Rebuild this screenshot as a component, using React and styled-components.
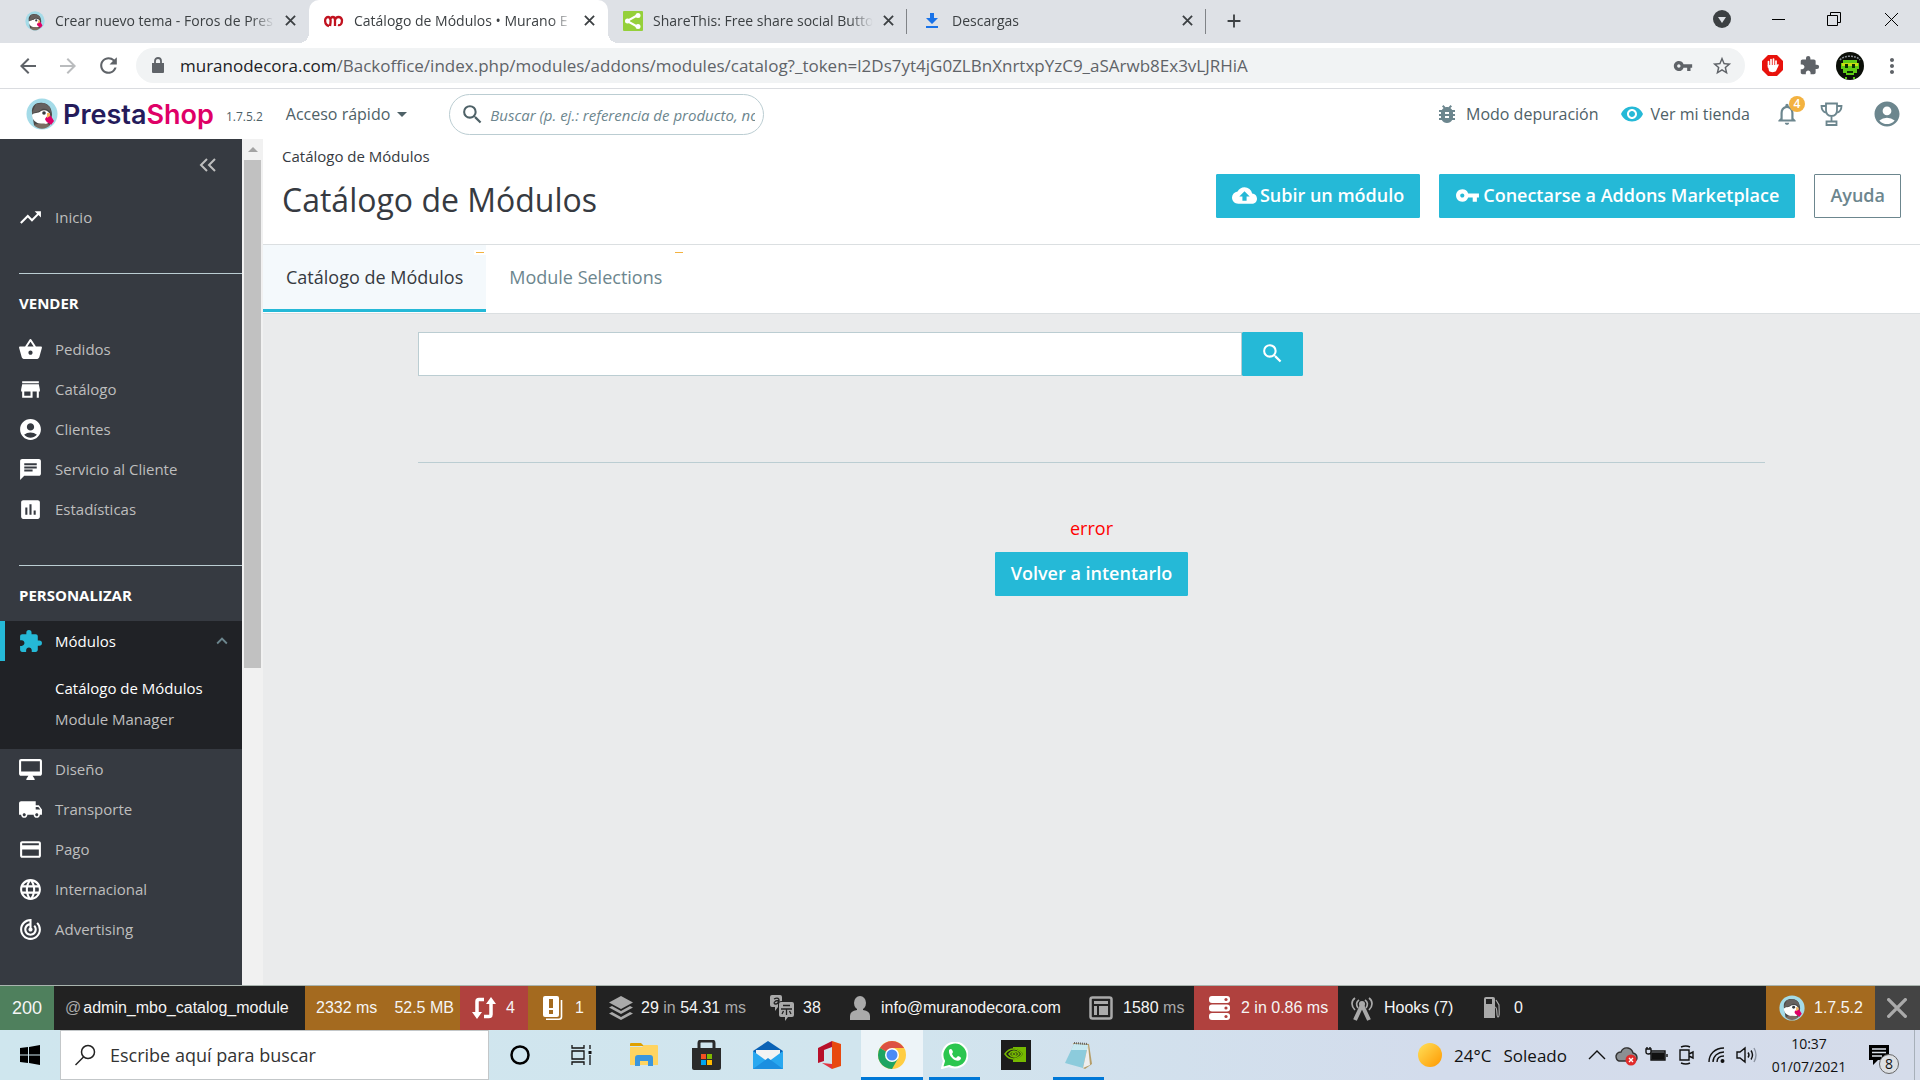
import React from "react";
import styled, { createGlobalStyle, css } from "styled-components";
import {
  MdTrendingUp, MdShoppingBasket, MdStore, MdAccountCircle, MdChat, MdAssessment, MdExtension,
  MdLocalShipping, MdCreditCard, MdLanguage, MdTrackChanges, MdSearch, MdVpnKey,
  MdCloudUpload, MdStarBorder, MdMoreVert, MdArrowBack, MdArrowForward, MdRefresh,
  MdKeyboardArrowUp, MdArrowDropDown, MdVisibility, MdBugReport, MdAdd, MdNotificationsNone,
} from "react-icons/md";

const cyan = "#25b9d7";
const ui = `"Open Sans", "Noto Sans", sans-serif`;
const arial = `"Liberation Sans", Arial, sans-serif`;

const Global = createGlobalStyle`
  * { box-sizing: border-box; }
  body { margin: 0; font-family: ${ui}; color: #363a41; background: #eaebec; }
  button, input { font-family: inherit; }
  a { color: inherit; text-decoration: none; }
  svg { display: block; flex: none; }
`;

const Screen = styled.div`
  min-height: 100vh;
  display: flex;
  flex-direction: column;
`;

const IconButton = styled.button`
  display: flex;
  align-items: center;
  justify-content: center;
  flex: none;
  width: ${(p) => p.$w || 24}px;
  height: ${(p) => p.$h || 24}px;
  padding: 0;
  border: 0;
  background: none;
  color: ${(p) => p.$color || "#3c4043"};
`;

/* ---------- browser window ---------- */

const TabStrip = styled.div`
  display: flex;
  height: 43px;
  background: #dee1e6;
  padding-left: 10px;
`;

const BrowserTab = styled.div`
  position: relative;
  display: flex;
  align-items: center;
  width: 299px;
  padding: 0 10px 2px 15px;
  gap: 10px;
  font-size: 14px;
  color: #3c4043;
  background: ${(p) => (p.$active ? "#fff" : "transparent")};
  border-radius: 10px 10px 0 0;
  ${(p) => p.$active && css`
    &::before, &::after {
      content: "";
      position: absolute;
      bottom: 0;
      width: 10px;
      height: 10px;
    }
    &::before { left: -10px; background: radial-gradient(circle at 0 0, transparent 10px, #fff 10px); }
    &::after { right: -10px; background: radial-gradient(circle at 100% 0, transparent 10px, #fff 10px); }
  `}
  ${(p) => p.$divider && css`
    &::after {
      content: "";
      position: absolute;
      right: 0;
      top: 9px;
      width: 1px;
      height: 25px;
      background: #808387;
    }
  `}
`;

const TabTitle = styled.span`
  flex: 1;
  min-width: 0;
  margin-right: -6px;
  white-space: nowrap;
  mask-image: linear-gradient(to right, #000 calc(100% - 26px), transparent calc(100% - 2px));
`;

const WindowControls = styled.div`
  display: flex;
  align-items: center;
  margin-left: auto;
  height: 38px;
`;

const AddressRow = styled.div`
  display: flex;
  align-items: center;
  height: 46px;
  padding: 0 16px;
  background: #fff;
  border-bottom: 1px solid #dadce0;
  color: #5f6368;
`;

const NavButtons = styled.div`
  display: flex;
  gap: 16px;
  margin-right: 16px;
`;

const Omnibox = styled.div`
  display: flex;
  flex: 1;
  align-items: center;
  height: 35px;
  padding: 0 12px 0 14px;
  border-radius: 18px;
  background: #f1f3f4;
  font-size: 17px;
  gap: 14px;
`;

const Url = styled.span`
  flex: 1;
  white-space: nowrap;
  b { font-weight: 400; color: #202124; }
`;

const OmniboxTools = styled.div`
  display: flex;
  align-items: center;
  gap: 18px;
`;

const Extensions = styled.div`
  display: flex;
  align-items: center;
  gap: 16px;
  margin-left: 17px;
`;

/* ---------- shop header ---------- */

const ShopHeader = styled.header`
  display: flex;
  align-items: center;
  height: 50px;
  padding: 0 18px 0 26px;
  background: #fff;
  color: #4e6167;
  font-size: 16px;
`;

const Brand = styled.a`
  display: flex;
  align-items: center;
  gap: 5px;
  font-family: Inter, "Open Sans", sans-serif;
  font-size: 27px;
  font-weight: 600;
  color: #251b5b;
  em { font-style: normal; color: #df0067; }
`;

const Version = styled.span`
  font-size: 12px;
  margin: 4px 23px 0 12px;
`;

const QuickAccess = styled.button`
  display: flex;
  align-items: center;
  padding: 0;
  border: 0;
  background: none;
  color: inherit;
  font-size: 16px;
`;

const HeaderSearch = styled.label`
  display: flex;
  align-items: center;
  gap: 5px;
  width: 315px;
  height: 41px;
  margin: 1px 0 0 35px;
  padding: 0 8px 0 10px;
  border: 1px solid #bbcdd2;
  border-radius: 21px;
  input {
    flex: 1;
    min-width: 0;
    padding: 0;
    border: 0;
    outline: 0;
    background: none;
    font-size: 15px;
    font-style: italic;
  }
  input::placeholder { color: #6c868e; }
`;

const HeaderActions = styled.nav`
  display: flex;
  align-items: center;
  margin-left: auto;
`;

const HeaderLink = styled.a`
  display: flex;
  align-items: center;
  gap: 7px;
  margin-right: 21px;
`;

const Bell = styled.div`
  position: relative;
  margin: 0 20px 0 3px;
  color: #6c868e;
`;

const TrophySlot = styled.div`
  margin-right: 29px;
`;

const Badge = styled.span`
  position: absolute;
  top: -5px;
  right: -5px;
  width: 16px;
  height: 16px;
  border-radius: 50%;
  background: #f3b240;
  color: #fff;
  font-size: 12px;
  font-weight: 600;
  line-height: 16px;
  text-align: center;
`;

/* ---------- sidebar ---------- */

const Body = styled.div`
  display: flex;
  flex: 1;
`;

const Sidebar = styled.aside`
  width: 242px;
  padding-bottom: 36px;
  background: #363a41;
  color: #bebebe;
  font-size: 15px;
`;

const CollapseRow = styled.div`
  display: flex;
  justify-content: flex-end;
  height: 58px;
  padding: 14px 22px 0 0;
`;

const MenuGroup = styled.ul`
  list-style: none;
  margin: 0;
  padding: 0;
`;

const MenuLink = styled.a`
  display: flex;
  align-items: center;
  gap: 12px;
  height: 40px;
  padding: 0 9px 0 ${(p) => (p.$active ? 13 : 18)}px;
  border-left: ${(p) => (p.$active ? 5 : 0)}px solid ${cyan};
  color: ${(p) => (p.$active ? "#fff" : "inherit")};
  svg:first-child { color: ${(p) => (p.$active ? cyan : "#fff")}; }
  svg:last-child:not(:first-child) { margin-left: auto; color: #6c868e; }
`;

const MenuTitle = styled.h2`
  margin: 36px 0 0 19px;
  padding: 18px 0 14px;
  border-top: 1px solid #bbcdd2;
  color: #fff;
  font-size: 15px;
  line-height: 23px;
  font-weight: 700;
`;

const ActiveBlock = styled.li`
  background: #202226;
`;

const SubMenu = styled.ul`
  list-style: none;
  margin: 0;
  padding: 12px 0 14px 55px;
  li { line-height: 31px; }
`;

const SubLink = styled.a`
  color: ${(p) => (p.$active ? "#fff" : "#bebebe")};
`;

const ScrollTrack = styled.div`
  width: 21px;
  padding: 0 2px;
  background: #f1f1f1;
`;

const ScrollArrow = styled.div`
  display: flex;
  align-items: center;
  justify-content: center;
  height: 21px;
`;

const ScrollThumb = styled.div`
  height: 60%;
  background: #c1c1c1;
`;

/* ---------- main page ---------- */

const Main = styled.main`
  flex: 1;
  min-width: 0;
`;

const PageHead = styled.div`
  display: flex;
  justify-content: space-between;
  height: 106px;
  padding: 6px 19px 0;
  background: #fff;
  border-bottom: 1px solid #dbdfe1;
`;

const Crumb = styled.div`
  font-size: 15px;
  line-height: 22px;
`;

const Title = styled.h1`
  margin: 8px 0 0;
  font-size: 32px;
  line-height: 50px;
  font-weight: 400;
`;

const Actions = styled.div`
  display: flex;
  align-items: flex-start;
  gap: 19px;
  padding-top: 29px;
`;

const Button = styled.button`
  display: flex;
  align-items: center;
  justify-content: center;
  gap: 3px;
  height: 44px;
  padding: 0 15px 2px;
  border: 1px solid ${(p) => (p.$outline ? "#6c868e" : cyan)};
  border-radius: 1px;
  background: ${(p) => (p.$outline ? "#fff" : cyan)};
  color: ${(p) => (p.$outline ? "#6c868e" : "#fff")};
  font-size: 18px;
  font-weight: 600;
  white-space: nowrap;
`;

const PageTabs = styled.nav`
  display: flex;
  height: 69px;
  background: #fff;
  border-bottom: 1px solid #dbdfe1;
`;

const PageTab = styled.a`
  position: relative;
  display: flex;
  align-items: center;
  height: 67px;
  padding: 0 23px;
  font-size: 18px;
  color: ${(p) => (p.$active ? "#363a41" : "#6c868e")};
  background: ${(p) => (p.$active ? "#f4f9fc" : "none")};
  border-bottom: 3px solid ${(p) => (p.$active ? cyan : "transparent")};
  &::after {
    content: "";
    position: absolute;
    top: 5px;
    right: 0;
    width: 8px;
    height: 1px;
    border: 2px solid #fff;
    background: #f3b240;
  }
`;

const Content = styled.section`
  padding: 18px 155px 0;
`;

const SearchForm = styled.form`
  display: flex;
  max-width: 885px;
  padding-bottom: 86px;
  input {
    flex: 1;
    min-width: 0;
    height: 44px;
    padding: 0 12px;
    border: 1px solid #bbcdd2;
    outline: 0;
    font-size: 16px;
  }
  button { width: 61px; }
`;

const Retry = styled.div`
  display: flex;
  flex-direction: column;
  align-items: center;
  padding-top: 53px;
  border-top: 1px solid #bbcdd2;
  color: #ff0000;
  font-size: 18px;
  line-height: 24px;
  gap: 12px;
`;

/* ---------- debug bar ---------- */

const DebugBar = styled.div`
  display: flex;
  height: 45px;
  border-top: 1px solid #a9b4ae;
  background: #222;
  color: #f5f5f5;
  font-family: ${arial};
  font-size: 16px;
`;

const Block = styled.div`
  display: flex;
  align-items: center;
  flex: none;
  gap: ${(p) => p.$gap || 10}px;
  width: ${(p) => p.$w}px;
  padding-left: ${(p) => p.$pad || 12}px;
  background: ${(p) => p.$bg || "transparent"};
  margin-left: ${(p) => (p.$end ? "auto" : 0)};
  white-space: nowrap;
  small { font-size: 16px; color: #aaa; }
  strong { font-size: 18px; font-weight: 400; }
`;

/* ---------- taskbar ---------- */

const Taskbar = styled.footer`
  display: flex;
  align-items: center;
  height: 50px;
  background: linear-gradient(90deg, #cfe6ee 0%, #d1e5ee 45%, #d3dcec 75%, #d5dcea 100%);
  color: #111;
`;

const TaskSearch = styled.label`
  display: flex;
  align-items: center;
  width: 429px;
  height: 50px;
  padding: 0 13px;
  gap: 14px;
  border: 1px solid #c3c7c9;
  background: #fff;
  input {
    flex: 1;
    padding: 0;
    border: 0;
    outline: 0;
    font-size: 18px;
  }
  input::placeholder { color: #333; }
`;

const TaskApp = styled.button`
  display: flex;
  align-items: center;
  justify-content: center;
  width: 62px;
  height: 50px;
  padding: 0;
  border: 0;
  background: ${(p) => (p.$active ? "#edf4f8" : "none")};
  ${(p) => p.$open && css`
    background-image: linear-gradient(#0078d7, #0078d7);
    background-size: ${p.$active ? "100%" : "51px"} 3px;
    background-position: bottom center;
    background-repeat: no-repeat;
  `}
`;

const Tray = styled.div`
  display: flex;
  align-items: center;
  height: 50px;
  margin-left: auto;
  padding-right: 5px;
  font-size: 17px;
`;

const Weather = styled.div`
  display: flex;
  align-items: center;
  margin-right: 18px;
  gap: 12px;
`;

const TrayIcons = styled.div`
  display: flex;
  align-items: center;
  gap: 6px;
`;

const Clock = styled.div`
  width: 100px;
  font-size: 14px;
  line-height: 23px;
  text-align: center;
`;

const Notice = styled.div`
  position: relative;
  width: 56px;
  height: 50px;
  padding: 15px 0 0 10px;
  border-right: 1px solid #a7b0b9;
  span {
    position: absolute;
    left: 20px;
    top: 24px;
    width: 20px;
    height: 20px;
    border: 1px solid #666;
    border-radius: 50%;
    background: #dcdfe3;
    font-size: 14px;
    line-height: 18px;
    text-align: center;
  }
`;

/* ---------- drawings ---------- */

const Cross = ({ s = 11, w = 2, color = "#3c4043" }) => (
  <svg width={s} height={s} viewBox="0 0 12 12" fill="none" stroke={color} strokeWidth={w}><path d="m1 1 10 10M11 1 1 11" strokeLinecap={s > 12 ? "round" : "butt"} /></svg>
);

const Lock = () => (
  <svg width="16" height="17" viewBox="0 0 16 17"><path d="M2 6h12v9q0 1-1 1H3q-1 0-1-1Z" fill="#5f6368" /><path d="M5 7V4c0-4 6-4 6 0v3" fill="none" stroke="#5f6368" strokeWidth="1.800" /></svg>
);

const Desktop = ({ size }) => (
  <svg width={size} height={size} viewBox="0 0 24 24" fill="currentColor">
    <path d="M21 2H3c-1.100 0-2 .9-2 2v12c0 1.100.9 2 2 2h7l-2 3v1h8v-1l-2-3h7c1.100 0 2-.9 2-2V4c0-1.100-.9-2-2-2zm0 12H3V4h18v10z" />
  </svg>
);

const Puffin = ({ s = 20 }) => (
  <svg width={s} height={s} viewBox="0 0 32 32">
    <circle cx="16" cy="16" r="15.500" fill="#a4dbe8" />
    <path d="M6 15C5 7 11 4 17 5c7 1 9 7 9 12l-2 10c-5 3-12 3-16 0Z" fill="#4b4948" />
    <path d="M6 17c2-3 6-1 9-4 4-2 8 0 9 4l1 5c-2 4-6 5-10 4-5-1-9-4-9-9Z" fill="#fff" />
    <path d="M6 15c4-1 7-1 10-4 4-1 7 1 9 4l-1-6-6-4-8 1Z" fill="#66615f" />
    <circle cx="18" cy="15" r="1.800" fill="#363a41" />
    <path d="M19 21c2-3 4-5 6-3l3 5-3 4c-1-2-5-2-6-6Z" fill="#df0067" />
    <path d="M21 15h3v3l-3 2Z" fill="#f4b35e" />
    <path d="M8 27c5-2 11-2 16 0-4 5-12 5-16 0Z" fill="#7b6d62" />
  </svg>
);

const MuranoMark = () => (
  <svg width="20" height="20" viewBox="0 0 20 20" fill="none" stroke="#c1121f" strokeWidth="2.300">
    <path d="M5 15C0 14 0 6 4 6c3 0 3 4 2 9M6 9c1-4 5-4 5 0v6M11 9c1-4 6-4 7 0 0 3-1 6-4 5" />
  </svg>
);

const ShareMark = () => (
  <svg width="20" height="20" viewBox="0 0 20 20">
    <rect width="20" height="20" rx="1" fill="#95d03a" />
    <path d="M15 4 4 10l11 6" fill="none" stroke="#fff" strokeWidth="2" />
    <g fill="#fff"><circle cx="15" cy="4.500" r="2.500" /><circle cx="4.500" cy="10" r="2.500" /><circle cx="15" cy="15.500" r="2.500" /></g>
  </svg>
);

const DownloadMark = () => (
  <svg width="20" height="16" viewBox="-3 0 20 16" fill="#1a73e8">
    <path d="M5 0h4v5h4l-6 6-6-6h4ZM1 13h12v2H1Z" />
  </svg>
);

const BlockMark = () => (
  <svg width="21" height="21" viewBox="0 0 21 21">
    <path d="M6 0h9l6 6v9l-6 6H6l-6-6V6Z" fill="#e8120c" />
    <path d="M6.500 12V6.500M9 11V4.500M11.500 11V4M14 12V6" stroke="#fff" strokeWidth="1.700" strokeLinecap="round" />
    <path d="M5.700 10h9.200l1-1c1 0 1 1 .500 2L14 16c-1 1.500-6 1.500-7 0Z" fill="#fff" />
  </svg>
);

const Avatar = () => (
  <svg width="28" height="28" viewBox="0 0 28 28">
    <circle cx="14" cy="14" r="14" fill="#0b0f08" />
    <path d="M4 8C7 3 21 3 24 8" fill="none" stroke="#8a9097" strokeWidth="1.500" strokeDasharray="2 1" />
    <path d="M7 8h14v3h2v6h-2v4h-3v2h-8v-2H7v-4H5v-6h2Z" fill="#5ecb14" />
    <path d="M6 11h16v3H6Z" fill="#c9dd12" />
    <path d="M9 12h3v4H9Zm7 0h3v4h-3ZM11 19h6v2h-6Z" fill="#0b2a05" />
    <path d="M9 25h2v2H9Zm8 0h2v2h-2Z" fill="#5ecb14" />
  </svg>
);

const Trophy = () => (
  <svg width="23" height="24" viewBox="0 0 23 24" fill="none" stroke="#6c868e" strokeWidth="1.800">
    <path d="M6 1.500h11V8c0 4-2.500 6-5.500 6S6 12 6 8ZM6 4H1.500c0 4 2 6 5 7M17 4h4.500c0 4-2 6-5 7M11.500 14v5M6.500 19.500h10v3.500h-10Z" />
  </svg>
);

const DoubleChevron = () => (
  <svg width="20" height="24" viewBox="0 0 20 24" fill="none" stroke="#bebebe" strokeWidth="2">
    <path d="m9 6-6 6 6 6M17 6l-6 6 6 6" />
  </svg>
);

const Restart = () => (
  <svg width="24" height="24" viewBox="0 0 24 24" fill="none" stroke="#fff" strokeWidth="3.500">
    <path d="M12 3.500H7q-2 0-2 2V17M12 20.500h5q2 0 2-2V7" /><path d="m0 16 5 7 5-7ZM14 8l5-7 5 7Z" fill="#fff" stroke="none" />
  </svg>
);

const LogBook = () => (
  <svg width="20" height="24" viewBox="0 0 20 24">
    <rect x="0" y="0" width="16" height="21" rx="2" fill="#fff" />
    <path d="M3 23.200h13q2.500 0 2.500-2.500V4" fill="none" stroke="#fff" strokeWidth="1.600" />
    <path d="M6 3h4v9H6Zm0 11h4v4H6Z" fill="#a46a1f" />
  </svg>
);

const Layers = () => (
  <svg width="24" height="24" viewBox="0 0 24 24" fill="#aaa">
    <path d="m12 0 12 6.500L12 13 0 6.500ZM3 10l9 5 9-5 3 1.500L12 18 0 11.500ZM3 16l9 5 9-5 3 1.500L12 24 0 17.500Z" />
  </svg>
);

const Translate = () => (
  <svg width="24" height="27" viewBox="0 0 24 27">
    <path d="M2 0h8q2 0 2 2v4q-4 0-4 4v2l-3 4v-4H2q-2 0-2-2V2q0-2 2-2Z" fill="#aaa" />
    <path d="M4 4c4-2 5 0 5 1v4M8.500 5.500C4 5.500 3 9 5.500 9 7 9 8.500 8 8.500 6" fill="none" stroke="#222" strokeWidth="1.300" />
    <path d="M11 7h11q2 0 2 2v11q0 2-2 2h-4l-3 4v-4h-4q-2 0-2-2V9q0-2 2-2Z" fill="#aaa" />
    <path d="M13 10.500h7M11 14h11M16.500 14V20M13.500 16 12 19M19.500 16 21 19" stroke="#222" strokeWidth="1.300" />
  </svg>
);

const Person = () => (
  <svg width="20" height="24" viewBox="0 0 20 24" fill="#aaa">
    <ellipse cx="10" cy="7" rx="6" ry="7" /><path d="M7 11h6v3q7 1 7 6v4H0v-4q0-5 7-6Z" />
  </svg>
);

const Template = () => (
  <svg width="24" height="24" viewBox="0 0 24 24">
    <rect x="1.500" y="1.500" width="21" height="21" rx="2" fill="none" stroke="#aaa" strokeWidth="2.500" />
    <path d="M5 5h14v3H5ZM5 10h3v9H5ZM10 10h9v9h-9Z" fill="#aaa" />
  </svg>
);

const Database = () => (
  <svg width="22" height="24" viewBox="0 0 22 24">
    <g fill="#fff"><rect width="21" height="7" rx="3" /><rect y="8.500" width="21" height="7" rx="3" /><rect y="17" width="21" height="7" rx="3" /></g>
    <g fill="#b0413e"><circle cx="17" cy="3.500" r="1.600" /><circle cx="17" cy="12" r="1.600" /><circle cx="17" cy="20.500" r="1.600" /></g>
  </svg>
);

const Antenna = () => (
  <svg width="22" height="25" viewBox="0 0 22 25" fill="none" stroke="#aaa" strokeWidth="1.700">
    <path d="M4 14C0 10 0 5 4 2M18 14c4-4 4-9 0-12M7 12c-2-3-2-6 1-8M15 12c2-3 2-6-1-8" />
    <circle cx="11" cy="8" r="3" fill="#aaa" stroke="none" />
    <path d="m11 9-7 15M11 9l7 15" strokeWidth="4" />
  </svg>
);

const Pump = () => (
  <svg width="16" height="23" viewBox="0 0 16 23">
    <path d="M0 2q0-2 2-2h7q2 0 2 2v19H0Z" fill="#aaa" /><path d="M2 2h6v5H2Z" fill="#222" />
    <path d="M11 10c3 0 1 10 3 10s1-7 1-12l-3-5" fill="none" stroke="#aaa" strokeWidth="1.200" />
  </svg>
);

const WindowsMark = () => (
  <svg width="20" height="20" viewBox="0 0 20 20"><path d="M0 3l8-1v7.500H0ZM9 2l11-2v9.500H9ZM0 10.500h8V18l-8-1ZM9 10.500h11V20L9 18Z" /></svg>
);

const Magnifier = () => (
  <svg width="22" height="22" viewBox="0 0 22 22" fill="none" stroke="#222" strokeWidth="1.500"><circle cx="14" cy="8" r="6.500" /><path d="m9.500 13-8 8" /></svg>
);

const apps = [
  ["Cortana", <svg width="20" height="20"><circle cx="10" cy="10" r="8.500" fill="none" stroke="#000" strokeWidth="2.500" /></svg>],
  ["Vista de tareas", <svg width="22" height="20" viewBox="0 0 22 20" fill="none" stroke="#111" strokeWidth="1.300"><path d="M1 0v3h12V0M1 20v-3h12v3M1 6h12v8H1ZM19 0v4M19 10v10" /><path d="M17.500 6h3v3h-3Z" fill="#111" stroke="none" /></svg>],
  ["Explorador", <svg width="28" height="24" viewBox="0 0 28 24"><path d="M0 1q0-1 1-1h10l3 3H0Z" fill="#dfa000" /><path d="M0 4h12l2-2h13q1 0 1 1v19H0Z" fill="#ffd460" /><path d="M5 23V15q0-3 3-3h12q3 0 3 3v8h-5v-5h-8v5Z" fill="#3b96dd" /></svg>],
  ["Store", <svg width="29" height="30" viewBox="0 0 29 30"><path d="M7 9V3q0-2 2-2h11q2 0 2 2v6" fill="none" stroke="#2b2b2b" strokeWidth="3" /><path d="M0 8h29v20q0 2-2 2H2q-2 0-2-2Z" fill="#2b2b2b" /><path d="M9 14h5v5H9Z" fill="#f25022" /><path d="M15 14h5v5h-5Z" fill="#7fba00" /><path d="M9 20h5v5H9Z" fill="#00a4ef" /><path d="M15 20h5v5h-5Z" fill="#ffb900" /></svg>],
  ["Correo", <svg width="30" height="28" viewBox="0 0 30 28"><path d="m0 10 15-10 15 10v4H0Z" fill="#0a62b5" /><path d="M3 9h24v12H3Z" fill="#f3f3f3" /><path d="M0 10l15 11L30 10v18H0Z" fill="#29a8f0" /><path d="m0 28 15-11 15 11Z" fill="#1c8fe0" /></svg>],
  ["Office", <svg width="24" height="28" viewBox="0 0 24 28"><path d="M0 7 14 0v6L6 9v11l-6 2Z" fill="#b8102a" /><path d="m14 0 9 3v22l-9 3V0Z" fill="#e8490f" /><path d="m4 22 10 1v5Z" fill="#e3323f" /></svg>],
  ["Chrome", <svg width="28" height="28" viewBox="0 0 28 28"><circle cx="14" cy="14" r="14" fill="#ffcd42" /><path d="M14 14 1.900 7A14 14 0 0 1 26.100 7H14Z" fill="#dd5144" /><path d="M1.900 7A14 14 0 0 0 14 28l6-10.500L14 14Z" fill="#1da462" /><circle cx="14" cy="14" r="7" fill="#fff" /><circle cx="14" cy="14" r="5.500" fill="#4c8bf5" /></svg>, true, true],
  ["WhatsApp", <svg width="27" height="27" viewBox="0 0 27 27"><path d="m1 26 2-7A12.500 12.500 0 1 1 8 24Z" fill="#2cc64f" stroke="#fff" strokeWidth="2" /><path d="M8 8c2-2 3-1 4 2l-1 2q1 3 4 4l2-2c3 1 4 2 2 4-3 3-12-3-11-10Z" fill="#fff" /></svg>, true],
  ["NVIDIA", <svg width="30" height="30" viewBox="0 0 30 30"><path d="M0 0h30v30H0Z" fill="#1c1c1c" /><path d="M12 7h13v15H12Z" fill="#76b900" /><path d="M4 14c5-7 13-7 18 0-4 6-13 8-18 0Z" fill="#1c1c1c" /><path d="M4 14c5-7 13-6 17 0-4 6-12 7-17 0ZM8 14c3-4 7-4 10 0-3 4-7 4-10 0Zm3 0q2-3 4 0-2 3-4 0Z" fill="none" stroke="#76b900" strokeWidth="1.500" /></svg>],
  ["Bloc de notas", <svg width="28" height="27" viewBox="0 0 28 27"><path d="m9 1 16 1 3 20-7 5-2-1Z" fill="#b59d68" /><path d="m10 2 14 1-5 23L1 21Z" fill="#8ccbdc" /><path d="m10 2 14 1-1 5L7 8Z" fill="#c7e9f1" /><path d="m24 3 2 20-7 3Z" fill="#eee" /><path d="m10 1 14 1" stroke="#666" strokeWidth="2" strokeDasharray="1 1" /></svg>, true],
];

const Glyph = ({ children }) => (
  <svg width="24" height="24" viewBox="0 0 24 24" fill="none" stroke="#111" strokeWidth="1.400">{children}</svg>
);

const MenuItems = ({ items }) => items.map(([label, Icon]) => (
  <li key={label}><MenuLink href="#"><Icon size={25} />{label}</MenuLink></li>
));

const CloseTab = () => (
  <IconButton $w={18} aria-label="Cerrar pestaña"><Cross /></IconButton>
);

export default function App() {
  return (
    <Screen>
      <Global />
      <TabStrip>
        <BrowserTab><Puffin /><TabTitle>Crear nuevo tema - Foros de Pres</TabTitle><CloseTab /></BrowserTab>
        <BrowserTab $active><MuranoMark /><TabTitle>Catálogo de Módulos • Murano E</TabTitle><CloseTab /></BrowserTab>
        <BrowserTab $divider><ShareMark /><TabTitle>ShareThis: Free share social Butto</TabTitle><CloseTab /></BrowserTab>
        <BrowserTab $divider><DownloadMark /><TabTitle>Descargas</TabTitle><CloseTab /></BrowserTab>
        <IconButton $w={56} $h={42} aria-label="Nueva pestaña"><MdAdd size={22} /></IconButton>
        <WindowControls>
          <IconButton $w={56} $h={43} aria-label="Buscar pestañas"><svg width="18" height="18"><circle cx="9" cy="9" r="9" fill="#3c4043" /><path d="M5 7h8l-4 6Z" fill="#dee1e6" /></svg></IconButton>
          <IconButton $w={56} aria-label="Minimizar"><svg width="13" height="13" stroke="#000"><path d="M0 6.500h13" /></svg></IconButton>
          <IconButton $w={56} aria-label="Restaurar"><svg width="14" height="14" fill="none" stroke="#000"><path d="M.500 3.500h10v10H.500ZM3.500 3V.500h10v10H11" /></svg></IconButton>
          <IconButton $w={58} aria-label="Cerrar"><svg width="13" height="13" stroke="#000"><path d="m0 0 13 13M13 0 0 13" /></svg></IconButton>
        </WindowControls>
      </TabStrip>
      <AddressRow>
        <NavButtons>
          <IconButton aria-label="Atrás" $color="#5f6368"><MdArrowBack size={24} /></IconButton>
          <IconButton aria-label="Adelante" $color="#babcbe"><MdArrowForward size={24} /></IconButton>
          <IconButton aria-label="Recargar" $color="#5f6368"><MdRefresh size={25} /></IconButton>
        </NavButtons>
        <Omnibox>
          <Lock />
          <Url><b>muranodecora.com</b>/Backoffice/index.php/modules/addons/modules/catalog?_token=l2Ds7yt4jG0ZLBnXnrtxpYzC9_aSArwb8Ex3vLJRHiA</Url>
          <OmniboxTools>
            <MdVpnKey size={20} />
            <MdStarBorder size={22} />
          </OmniboxTools>
        </Omnibox>
        <Extensions>
          <BlockMark />
          <MdExtension size={21} />
          <Avatar />
          <MdMoreVert size={24} />
        </Extensions>
      </AddressRow>

      <ShopHeader>
        <Brand href="#"><Puffin s={32} /><span>Presta<em>Shop</em></span></Brand>
        <Version>1.7.5.2</Version>
        <QuickAccess>Acceso rápido<MdArrowDropDown size={24} /></QuickAccess>
        <HeaderSearch><MdSearch size={25} /><input aria-label="Buscar" placeholder="Buscar (p. ej.: referencia de producto, no" /></HeaderSearch>
        <HeaderActions>
          <HeaderLink href="#"><MdBugReport size={24} color="#6c868e" />Modo depuración</HeaderLink>
          <HeaderLink href="#"><MdVisibility size={24} color={cyan} />Ver mi tienda</HeaderLink>
          <Bell><MdNotificationsNone size={26} /><Badge>4</Badge></Bell>
          <TrophySlot><Trophy /></TrophySlot>
          <IconButton $w={30} $h={30} $color="#6c868e" aria-label="Cuenta"><MdAccountCircle size={30} /></IconButton>
        </HeaderActions>
      </ShopHeader>

      <Body>
        <Sidebar>
          <CollapseRow><IconButton aria-label="Contraer menú"><DoubleChevron /></IconButton></CollapseRow>
          <MenuGroup><MenuItems items={[["Inicio", MdTrendingUp]]} /></MenuGroup>
          <MenuTitle>VENDER</MenuTitle>
          <MenuGroup>
            <MenuItems items={[["Pedidos", MdShoppingBasket], ["Catálogo", MdStore], ["Clientes", MdAccountCircle], ["Servicio al Cliente", MdChat], ["Estadísticas", MdAssessment]]} />
          </MenuGroup>
          <MenuTitle>PERSONALIZAR</MenuTitle>
          <MenuGroup>
            <ActiveBlock>
              <MenuLink href="#" $active><MdExtension size={25} />Módulos<MdKeyboardArrowUp size={22} /></MenuLink>
              <SubMenu>
                <li><SubLink href="#" $active>Catálogo de Módulos</SubLink></li>
                <li><SubLink href="#">Module Manager</SubLink></li>
              </SubMenu>
            </ActiveBlock>
            <MenuItems items={[["Diseño", Desktop], ["Transporte", MdLocalShipping], ["Pago", MdCreditCard], ["Internacional", MdLanguage], ["Advertising", MdTrackChanges]]} />
          </MenuGroup>
        </Sidebar>
        <ScrollTrack>
          <ScrollArrow><svg width="10" height="5" fill="#a3a3a3"><path d="M0 5 5 0l5 5Z" /></svg></ScrollArrow>
          <ScrollThumb />
        </ScrollTrack>
        <Main>
          <PageHead>
            <div>
              <Crumb>Catálogo de Módulos</Crumb>
              <Title>Catálogo de Módulos</Title>
            </div>
            <Actions>
              <Button><MdCloudUpload size={25} />Subir un módulo</Button>
              <Button><MdVpnKey size={25} />Conectarse a Addons Marketplace</Button>
              <Button $outline>Ayuda</Button>
            </Actions>
          </PageHead>
          <PageTabs>
            <PageTab href="#" $active>Catálogo de Módulos</PageTab>
            <PageTab href="#">Module Selections</PageTab>
          </PageTabs>
          <Content>
            <SearchForm>
              <input aria-label="Buscar módulos" />
              <Button type="button" aria-label="Buscar"><MdSearch size={25} /></Button>
            </SearchForm>
            <Retry>
              error
              <Button>Volver a intentarlo</Button>
            </Retry>
          </Content>
        </Main>
      </Body>

      <DebugBar>
        <Block $w={54} $bg="#4f805d"><strong>200</strong></Block>
        <Block $w={251} $gap={2} $pad={11}><small>@</small>admin_mbo_catalog_module</Block>
        <Block $w={155} $bg="#a46a1f" $gap={17} $pad={11}><span>2332 ms</span><span>52.5 MB</span></Block>
        <Block $w={68} $bg="#b0413e"><Restart />4</Block>
        <Block $w={68} $bg="#a46a1f" $pad={15} $gap={12}><LogBook />1</Block>
        <Block $w={160} $pad={13} $gap={8}><Layers /><span>29 <small>in</small> 54.31 <small>ms</small></span></Block>
        <Block $w={80} $pad={14} $gap={9}><Translate />38</Block>
        <Block $w={240} $pad={14} $gap={11}><Person />info@muranodecora.com</Block>
        <Block $w={118} $pad={13}><Template /><span>1580 <small>ms</small></span></Block>
        <Block $w={144} $bg="#b0413e" $pad={15}><Database />2 in 0.86 ms</Block>
        <Block $w={130} $pad={13} $gap={11}><Antenna />Hooks (7)</Block>
        <Block $w={80} $pad={16} $gap={14}><Pump />0</Block>
        <Block $w={109} $bg="#a46a1f" $end $pad={13} $gap={9}><Puffin s={26} />1.7.5.2</Block>
        <Block $w={45} $bg="#444"><Cross s={20} color="#aaa" /></Block>
      </DebugBar>

      <Taskbar>
        <IconButton $w={60} $h={50} aria-label="Inicio"><WindowsMark /></IconButton>
        <TaskSearch><Magnifier /><input aria-label="Buscar en Windows" placeholder="Escribe aquí para buscar" /></TaskSearch>
        {apps.map(([name, icon, open, active]) => (
          <TaskApp key={name} aria-label={name} $open={open} $active={active}>{icon}</TaskApp>
        ))}
        <Tray>
          <Weather>
            <svg width="24" height="24"><defs><linearGradient id="sun" x1="0" y1="0" x2="1" y2="1"><stop offset="0" stopColor="#ffe15a" /><stop offset="1" stopColor="#ff9800" /></linearGradient></defs><circle cx="12" cy="12" r="12" fill="url(#sun)" /></svg>
            <span>24°C</span><span>Soleado</span>
          </Weather>
          <TrayIcons>
            <Glyph><path d="m4 16 8-8 8 8" /></Glyph>
            <Glyph><path d="M4 18q-3-1-3-5 1-4 5-4 2-5 7-4 4 1 5 5 4 1 4 5 0 3-4 3Z" fill="#8b8f93" stroke="#333" /><circle cx="16" cy="17" r="5.500" fill="#e02b2b" stroke="none" /><path d="m14 15 4 4M18 15l-4 4" stroke="#fff" /></Glyph>
            <Glyph><path d="M6 8h14v9H6ZM22 11v3M1 6h5v3q0 2-2.500 2T1 9ZM2 6V4M5 6V4" /><path d="M7 10h12v6H7Z" fill="#111" /></Glyph>
            <Glyph><path d="M5 7h9v10H5ZM14 11l4-2v6l-4-2M6 4q5-2 9 0M6 20q5 2 9 0" /></Glyph>
            <Glyph><path d="M4 19C4 11 10 5 19 5M8 19C8 13 13 9 19 9M12 19c0-4 3-6 7-6" /><circle cx="17.500" cy="18" r="1.300" fill="#111" /></Glyph>
            <Glyph><path d="M2 9h3l5-4v14l-5-4H2ZM13 9.500q2 2.500 0 5M16 7.500q3 4.500 0 9" /><path d="M19 5q4 7 0 14" stroke="#8b93a0" /></Glyph>
          </TrayIcons>
          <Clock>10:37<br />01/07/2021</Clock>
          <Notice><svg width="20" height="20" viewBox="0 0 20 20"><path d="M0 0h20v15H9l-5 5v-5H0Z" /><path d="M3 4h14M3 7.500h14M3 11h10" stroke="#dce2ea" strokeWidth="1.300" /></svg><span>8</span></Notice>
        </Tray>
      </Taskbar>
    </Screen>
  );
}
